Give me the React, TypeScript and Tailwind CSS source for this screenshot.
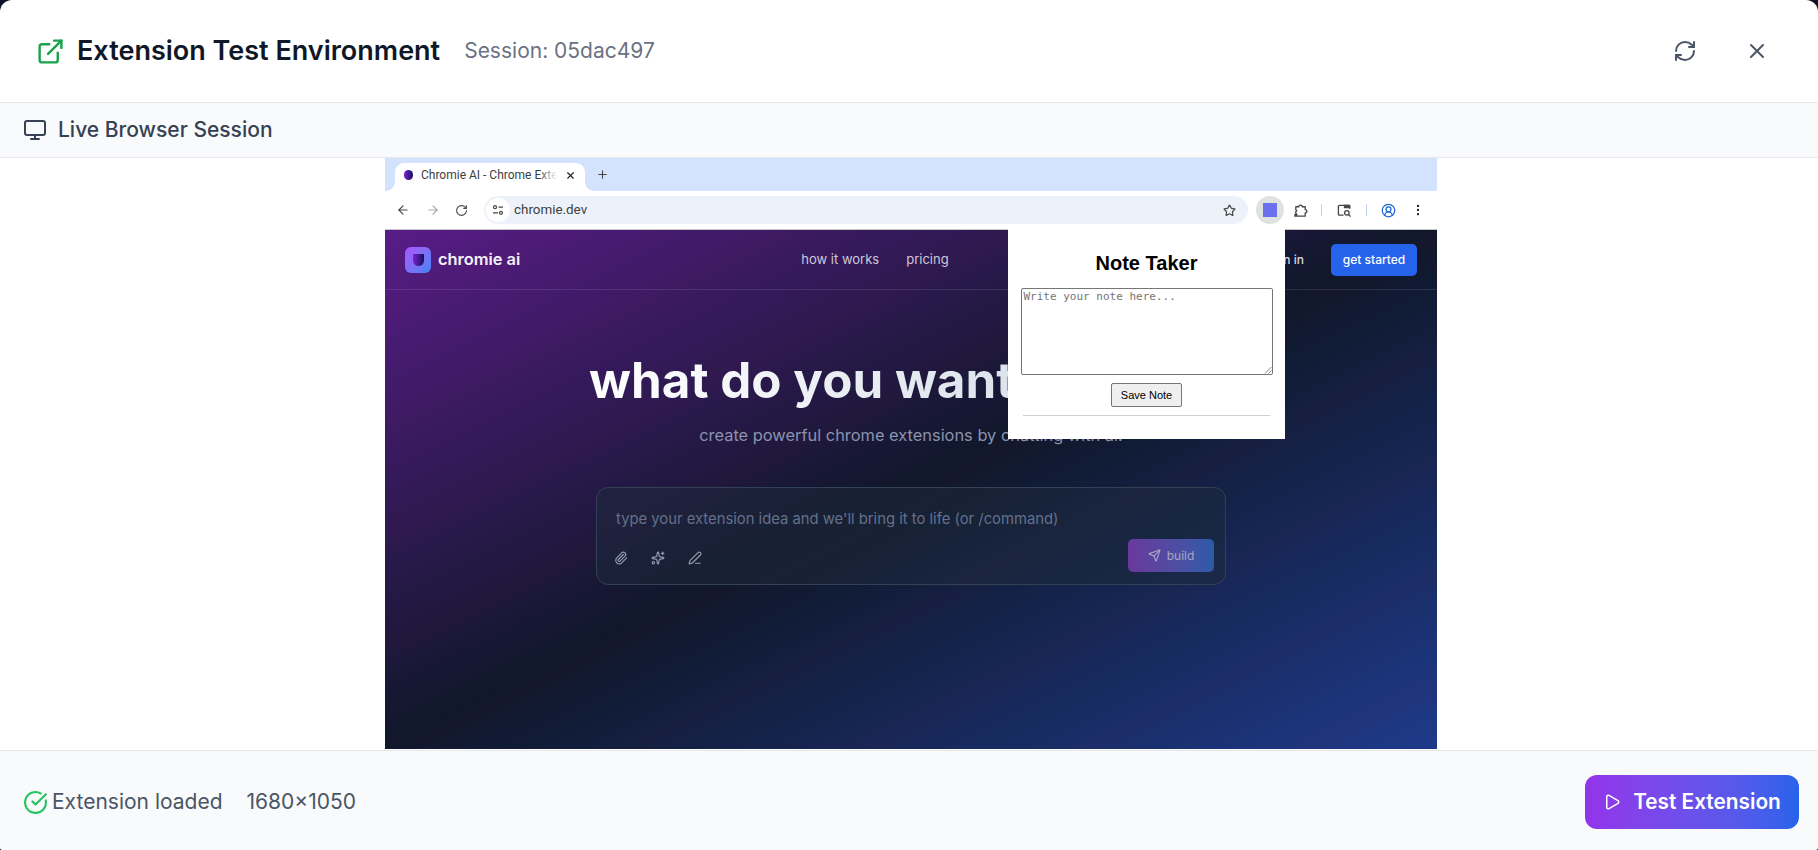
import React from 'react';
import {
  ExternalLink, RefreshCw, X, Monitor, CircleCheckBig, Play, ArrowLeft, ArrowRight, RotateCw, Star,
  EllipsisVertical, CircleUserRound, Plus, Paperclip, Sparkles, PenLine, Send,
} from 'lucide-react';

function ChromeBar() {
  return (
    <div className="font-['Roboto','Noto_Sans',sans-serif] text-[#3c4043]">
      <div className="h-[33px] bg-[#d3e3fd] flex items-end pl-[10px]">
        <div className="relative w-[190px] h-[28px] bg-white rounded-t-[9px] flex items-center pl-[9px] pr-[9px] pb-[4px]">
          <span className="absolute -left-[9px] bottom-0 w-[9px] h-[9px] bg-[radial-gradient(circle_at_0_0,transparent_8.5px,white_9px)]" />
          <span className="absolute -right-[9px] bottom-0 w-[9px] h-[9px] bg-[radial-gradient(circle_at_100%_0,transparent_8.5px,white_9px)]" />
          <span className="w-[9px] h-[10px] rounded-full bg-gradient-to-r from-[#7c1fd0] to-[#101060]" />
          <span className="relative ml-[8px] w-[136px] text-[12px] whitespace-nowrap overflow-hidden">
            Chromie AI - Chrome Exte
            <span className="absolute right-0 top-0 h-full w-[18px] bg-gradient-to-r from-transparent to-white" />
          </span>
          <X className="ml-auto w-[11px] h-[11px] text-[#202124]" strokeWidth={2.5} />
        </div>
        <Plus className="ml-[11px] mb-[10px] w-[13px] h-[13px] text-[#474747]" />
      </div>
      <div className="h-[39px] bg-white border-b border-[#c7c7c7] flex items-center pl-[11px] pr-[12px]">
        <ArrowLeft className="w-[14px] h-[14px] text-[#474747]" />
        <ArrowRight className="ml-[16px] w-[14px] h-[14px] text-[#a8a8a8]" />
        <RotateCw className="ml-[15px] w-[13px] h-[13px] text-[#474747]" />
        <div className="ml-[16px] w-[764px] h-[28px] rounded-full bg-[#edf2fa] flex items-center pl-[2px] pr-[12px]">
          <span className="w-[24px] h-[24px] rounded-full bg-white flex items-center justify-center">
            <svg viewBox="0 0 12 12" className="w-[12px] h-[12px] text-[#474747]" fill="none" stroke="currentColor" strokeWidth="1.2">
              <circle cx="3" cy="3.2" r="1.5" />
              <path d="M6.5 3.2H11M1 8.8h5" />
              <circle cx="9" cy="8.8" r="1.5" />
            </svg>
          </span>
          <span className="ml-[4px] text-[13.4px]">chromie.dev</span>
          <Star className="ml-auto w-[13px] h-[13px] text-[#474747]" strokeWidth={2.2} />
        </div>
        <span className="ml-[8px] w-[28px] h-[28px] rounded-full bg-[#dfe3e0] flex items-center justify-center">
          <span className="w-[14px] h-[14px] bg-[#6b70ef]" />
        </span>
        <svg viewBox="0 0 16 16" className="ml-[9px] w-[15px] h-[15px] text-[#474747]" fill="none" stroke="currentColor" strokeWidth="1.4" strokeLinejoin="round">
          <path d="M2 14v-1.5h2.2L2.6 10.2 4 8.2l-1-1V4h3.2a1.8 1.8 0 1 1 3.6 0H13v3a1.8 1.8 0 1 1 0 3.6V14z" />
        </svg>
        <span className="ml-[13px] w-px h-[12px] bg-[#c4d4ee]" />
        <svg viewBox="0 0 16 16" className="ml-[15px] w-[15px] h-[15px] text-[#474747]" fill="none" stroke="currentColor" strokeWidth="1.4">
          <path d="M7 13H2.5a1 1 0 0 1-1-1V3.5a1 1 0 0 1 1-1h10a1 1 0 0 1 1 1V6" />
          <path d="M8 2.5h5.5V5H8z" fill="currentColor" />
          <circle cx="10.5" cy="10.5" r="2.4" />
          <path d="M12.3 12.3l2.2 2.2" />
        </svg>
        <span className="ml-[14px] w-px h-[12px] bg-[#c4d4ee]" />
        <CircleUserRound className="ml-[14px] w-[15px] h-[15px] text-[#1a66d6]" />
        <EllipsisVertical className="ml-[15px] w-[14px] h-[14px] text-[#202124]" />
      </div>
    </div>
  );
}

function NotePopup() {
  return (
    <div className="absolute left-[623px] top-[71px] w-[277px] h-[210px] bg-white flex flex-col items-center pt-[21px] font-['Liberation_Sans',sans-serif]">
      <div className="text-[20px] leading-[26px] font-bold text-black">Note Taker</div>
      <div className="relative mt-[12px] w-[252px] h-[87px] border border-[#767676] rounded-[2px] px-[2px] py-[1px] font-['DejaVu_Sans_Mono',monospace] text-[11px] leading-[14px] text-[#757575]">
        Write your note here...
        <svg viewBox="0 0 8 8" className="absolute right-0 bottom-0 w-[8px] h-[8px] text-[#8a8a8a]" stroke="currentColor" fill="none">
          <path d="M1 7.5L7.5 1M4.5 7.5L7.5 4.5" />
        </svg>
      </div>
      <div className="mt-[8px] w-[71px] h-[24px] bg-[#efefef] border border-[#767676] rounded-[2px] flex items-center justify-center text-[11px] text-black">
        Save Note
      </div>
      <div className="mt-[8px] w-[247px] border-t border-[#cfcfcf]" />
    </div>
  );
}

function ChromieSite() {
  return (
    <div className="flex-1 min-h-0 bg-[repeating-linear-gradient(153.7deg,transparent_0,transparent_50px,rgba(130,25,70,0.04)_75px,transparent_100px),linear-gradient(to_bottom_right,#581c87,#0f172a_50%,#1e3a8a)] font-['Inter',sans-serif]">
      <div className="h-[60px] border-b border-white/10 flex items-center pl-[20px] pr-[20px]">
        <span className="w-[26px] h-[26px] rounded-[6px] bg-gradient-to-br from-[#a855f7] to-[#3b82f6] flex items-center justify-center">
          <span className="w-[11px] h-[12px] rounded-b-full rounded-t-[5px] bg-gradient-to-r from-[#7c1fd0] to-[#101060]" />
        </span>
        <span className="ml-[7px] text-[16.4px] font-semibold text-[#f3f0fa]">chromie ai</span>
        <span className="ml-[281px] text-[13px] text-[#cfc8dc]">how it works</span>
        <span className="ml-[27px] text-[13px] text-[#cfc8dc]">pricing</span>
        <span className="ml-auto text-[12px] font-medium text-[#d6d9e2]">sign in</span>
        <span className="ml-[27px] w-[86px] h-[32px] rounded-[5px] bg-[#2563eb] flex items-center justify-center text-[12px] font-medium text-white">get started</span>
      </div>
      <div className="flex flex-col items-center pt-[60px]">
        <h1 className="text-[49.4px] leading-[60px] font-bold bg-gradient-to-r from-white to-[#cbd5e1] bg-clip-text text-transparent whitespace-nowrap">what do you want to build?</h1>
        <p className="mt-[13px] text-[16.4px] leading-[24px] text-[#8b93ae]">create powerful chrome extensions by chatting with ai.</p>
        <div className="mt-[40px] w-[630px] h-[98px] rounded-[12px] border border-[#334155] bg-[#1e293b]/50 pl-[19px] pr-[11px] pt-[19px] pb-[12px] flex flex-col justify-between">
          <div className="text-[14.8px] leading-[24px] text-[#64708a]">type your extension idea and we'll bring it to life (or /command)</div>
          <div className="flex items-center justify-between">
            <div className="-ml-[2px] flex items-center gap-[23px] text-[#949cb0]">
              <Paperclip className="w-[14px] h-[14px]" />
              <Sparkles className="w-[14px] h-[14px]" />
              <PenLine className="w-[14px] h-[14px]" />
            </div>
            <div className="w-[86px] h-[33px] -mt-[4px] rounded-[5px] bg-gradient-to-r from-[#68389c] to-[#2a5ba8] flex items-center justify-center gap-[6px] text-[12px] text-[#a5a6c4]">
              <Send className="w-[13px] h-[13px]" />
              build
            </div>
          </div>
        </div>
      </div>
    </div>
  );
}

export default function App() {
  return (
    <div className="h-[850px] w-full bg-[#0f1226] overflow-hidden font-['Inter',sans-serif]">
      <div className="h-full rounded-t-xl rounded-b-[3px] bg-white flex flex-col overflow-hidden">
        <header className="h-[103px] shrink-0 border-b border-gray-200 flex items-center pl-[36px] pr-[49px]">
          <ExternalLink className="w-[29px] h-[29px] text-[#16a34a]" />
          <h2 className="ml-[12px] text-[27px] font-semibold text-gray-900">Extension Test Environment</h2>
          <span className="ml-6 text-[21px] text-gray-500">Session: 05dac497</span>
          <RefreshCw className="ml-auto w-6 h-6 text-gray-600" />
          <X className="ml-12 w-6 h-6 text-gray-600" />
        </header>
        <div className="h-[55px] shrink-0 bg-gray-50 border-b border-gray-200 flex items-center pl-[23px]">
          <Monitor className="w-6 h-6 text-gray-700" />
          <span className="ml-[11px] text-[21px] font-medium text-gray-700">Live Browser Session</span>
        </div>
        <main className="flex-1 min-h-0 flex justify-center pb-px pl-[4px]">
          <div className="relative w-[1052px] flex flex-col overflow-hidden">
            <ChromeBar />
            <ChromieSite />
            <NotePopup />
          </div>
        </main>
        <footer className="h-[100px] shrink-0 bg-gray-50 border-t border-gray-200 flex items-center pl-[23px] pr-[19px] pt-[3px]">
          <CircleCheckBig className="w-[25px] h-[25px] text-[#22c55e]" />
          <span className="ml-[4px] text-[21px] text-gray-600">Extension loaded</span>
          <span className="ml-6 text-[21px] text-gray-600">1680×1050</span>
          <button className="ml-auto w-[214px] h-[54px] rounded-xl bg-gradient-to-r from-[#9333ea] to-[#2563eb] flex items-center justify-center gap-[12px] text-[20.8px] font-semibold text-white">
            <Play className="w-[18px] h-[18px]" />
            Test Extension
          </button>
        </footer>
      </div>
    </div>
  );
}
